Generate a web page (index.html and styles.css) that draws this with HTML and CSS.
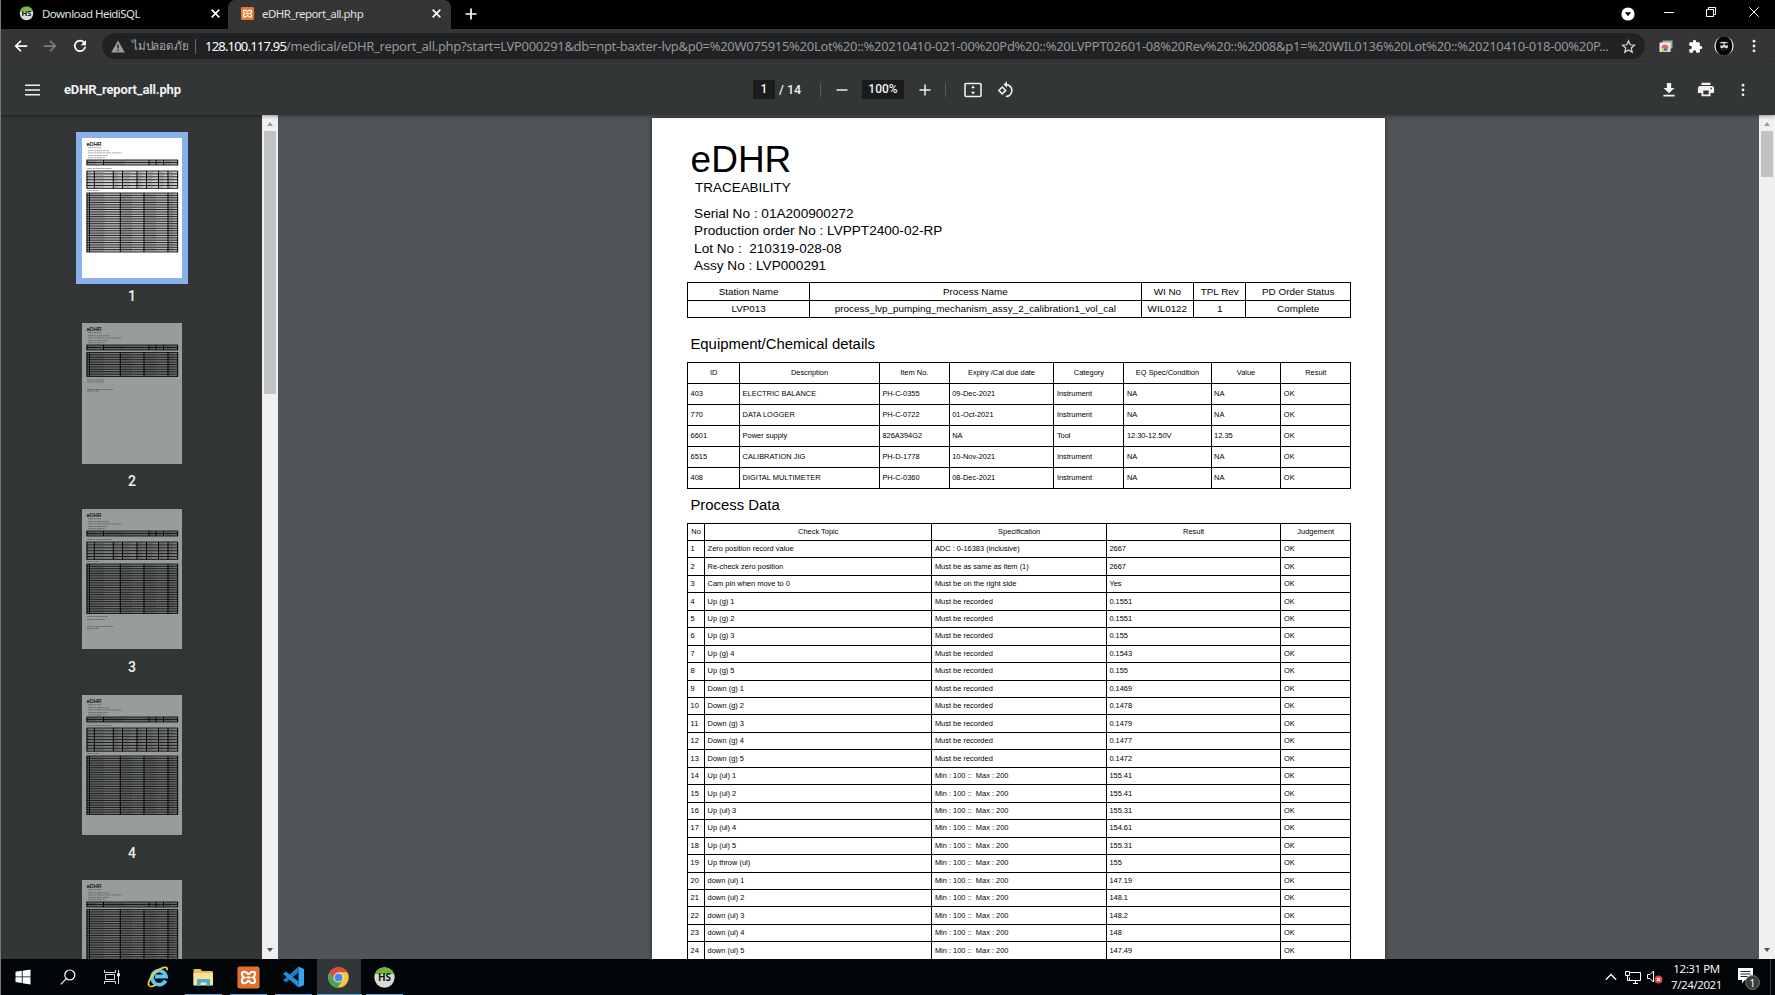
FILE: index.html
```html
<!DOCTYPE html>
<html lang="en">
<head>
<meta charset="utf-8">
<title>eDHR_report_all.php</title>
<link rel="stylesheet" href="styles.css">
</head>
<body>
<div class="screen">
  <header class="tabstrip">
    <div class="tab">
      <svg class="fav" viewBox="0 0 16 16"><circle cx="8" cy="8" r="7.2" fill="#d9dcd6"/><path d="M1 6a7.2 7.2 0 0 1 14 0z" fill="#7db842"/><text x="8" y="11" text-anchor="middle" class="hs-text">HS</text></svg>
      <span class="tab-title t1">Download HeidiSQL</span>
      <svg class="x" viewBox="0 0 10 10"><path d="M1.5 1.5l7 7M8.500 1.500l-7 7"/></svg>
    </div>
    <div class="tab active">
      <svg class="fav" viewBox="0 0 16 16"><rect x="1" y="1" width="14" height="14" rx="1.500" fill="#e8772e"/><path d="M5.200 4.300C3 4.300 3.400 7 5 8c-1.600 1-2 3.700.2 3.700C7 11.700 7 10.200 8 10.200s1 1.500 2.800 1.500C13 11.700 12.600 9 11 8c1.600-1 2-3.700-.2-3.700C9 4.300 9 5.800 8 5.800S7 4.300 5.200 4.300zM6.500 8h3" fill="none" stroke="#fff" stroke-width="1.400"/></svg>
      <span class="tab-title t2">eDHR_report_all.php</span>
      <svg class="x" viewBox="0 0 10 10"><path d="M1.500 1.500l7 7M8.500 1.500l-7 7"/></svg>
    </div>
    <svg class="plus" viewBox="0 0 12 12"><path d="M6 .5v11M.5 6h11"/></svg>
    <div class="win">
      <svg class="w-drop" viewBox="0 0 14 14"><circle cx="7" cy="7" r="6.600" fill="#fff"/><path d="M3.900 5.300h6.200L7 9.300z" fill="#000"/></svg>
      <svg class="w-min" viewBox="0 0 10 10"><path d="M0 5.500h10"/></svg>
      <svg class="w-max" viewBox="0 0 10 10"><path d="M.5 2.500h7v7h-7zM2.500 2.500v-2h7v7h-2"/></svg>
      <svg class="w-close" viewBox="0 0 10 10"><path d="M.3.3l9.400 9.400M9.700.3L.3 9.700"/></svg>
    </div>
  </header>

  <div class="navbar">
    <svg class="nav-i" viewBox="0 0 16 16"><path d="M15 8H2.500M8 2L2 8l6 6"/></svg>
    <svg class="nav-i dim" viewBox="0 0 16 16"><path d="M1 8h12.500M8 2l6 6-6 6"/></svg>
    <svg class="nav-i" viewBox="0 0 16 16"><path d="M13 4.500A6 6 0 1 0 14 8.700"/><path d="M14.800 1.200v6H8.900z" class="solid"/></svg>
    <div class="omnibox">
      <svg class="warn" viewBox="0 0 14 13"><path d="M7 .5L13.800 12.500H.2z" fill="#9a9d9f"/><path d="M7 4.600v4M7 9.700v1.400" stroke="#202325" stroke-width="1.400"/></svg>
      <span class="thai">ไม่ปลอดภัย</span>
      <span class="sep"></span>
      <span class="url"><b>128.100.117.95</b>/medical/eDHR_report_all.php?start=LVP000291&amp;db=npt-baxter-lvp&amp;p0=%20W075915%20Lot%20::%20210410-021-00%20Pd%20::%20LVPPT02601-08%20Rev%20::%2008&amp;p1=%20WIL0136%20Lot%20::%20210410-018-00%20P...</span>
      <svg class="star" viewBox="0 0 24 24"><path d="M12 3l2.700 6.200 6.800.6-5.100 4.500 1.500 6.700-5.900-3.500L6.100 21l1.500-6.700-5.100-4.500 6.800-.6z"/></svg>
    </div>
    <div class="ext">
      <svg class="e-pic" viewBox="0 0 14 14"><path d="M3.500 1.500h10v8h-10z" fill="#aaa9a5"/><path d="M.5 3.500h11v9.500H.5z" fill="#ececea"/><path d="M2.500 9.500V9a3.500 3.500 0 0 1 7 0v.5z" fill="#d5695c"/><path d="M2.500 9.500h3V13h-3z" fill="#e3c667"/><path d="M7.500 9.500h2V13h-2z" fill="#c7b78c"/><circle cx="6.500" cy="10.500" r="1.700" fill="#5572aa"/></svg>
      <svg class="e-puz" viewBox="0 0 24 24"><path d="M20.500 11H19V7a2 2 0 0 0-2-2h-4V3.500a2.500 2.500 0 0 0-5 0V5H4a2 2 0 0 0-2 2v3.800h1.500a2.700 2.700 0 0 1 0 5.400H2V20a2 2 0 0 0 2 2h3.800v-1.500a2.700 2.700 0 0 1 5.400 0V22H17a2 2 0 0 0 2-2v-4h1.500a2.500 2.500 0 0 0 0-5z"/></svg>
      <svg class="e-ava" viewBox="0 0 20 20"><circle cx="10" cy="10" r="9.600" fill="#fff"/><ellipse cx="10" cy="10" rx="8.400" ry="9.800" fill="#050505"/><path d="M5.800 6.500q4-1.500 7.800 0l.4 4.500q-1 3-4 3.800-2.500-.6-3.500-3.300z" fill="#e4e4e4"/><path d="M5.500 7.300h4v2.200H6zM10.500 7.300H14l-.4 2.200h-2.800zM7 12.400q3-2 6 0l-3 3z" fill="#111"/></svg>
      <svg class="dots" viewBox="0 0 4 16"><circle cx="2" cy="2.500" r="1.600"/><circle cx="2" cy="8" r="1.600"/><circle cx="2" cy="13.500" r="1.600"/></svg>
    </div>
  </div>

  <div class="pdfbar">
    <div class="left">
      <svg class="burger" viewBox="0 0 16 12"><path d="M0 1h16M0 6h16M0 11h16"/></svg>
      <b class="file">eDHR_report_all.php</b>
    </div>
    <div class="mid">
      <span class="box pg">1</span><span class="of">/ 14</span>
      <span class="vr"></span>
      <svg class="pm" viewBox="0 0 12 12"><path d="M.5 6h11"/></svg>
      <span class="box zm">100%</span>
      <svg class="pm" viewBox="0 0 12 12"><path d="M6 .5v11M.5 6h11"/></svg>
      <span class="vr v2"></span>
      <svg class="fit" viewBox="0 0 18 16"><rect x="1" y="1.500" width="16" height="13" rx="1"/><path class="solid" d="M9 3.600l2 2.600H7zM9 12.400L7 9.800h4z"/></svg>
      <svg class="rot" viewBox="0 0 18 18"><path d="M5.300 6l3.400 3.400-3.400 3.400-3.500-3.400z"/><path d="M9 3.500a6 6 0 1 1-.2 12"/><path class="solid" d="M10 .2v6.600L6.500 3.500z"/></svg>
    </div>
    <div class="right">
      <svg class="dl" viewBox="0 0 14 16"><path d="M4.700 1h4.600v5.500h3.500L7 12 1.200 6.500h3.500zM1 13.500h12V15.500H1z"/></svg>
      <svg class="pr" viewBox="0 0 20 18"><path d="M5 1.500h10V4H5zM3.500 5h13A2.500 2.500 0 0 1 19 7.500V13h-4v3.500H5V13H1V7.500A2.500 2.500 0 0 1 3.500 5zM7 10v4.500h6V10zM15 7v1.600h1.600V7z" fill-rule="evenodd"/></svg>
      <svg class="dots" viewBox="0 0 4 16"><circle cx="2" cy="2.500" r="1.600"/><circle cx="2" cy="8" r="1.600"/><circle cx="2" cy="13.500" r="1.600"/></svg>
    </div>
  </div>

  <main class="viewer">
    <aside class="side"><div class="thumbs" id="thumbs"></div></aside>
    <div class="bar"><i class="up"></i><div class="grip g1"></div><i class="down"></i></div>
    <section class="canvas">
      <article class="page">
        <h1>eDHR</h1>
        <div class="trace">TRACEABILITY</div>
        <div class="meta">
          <div>Serial No : 01A200900272</div>
          <div>Production order No : LVPPT2400-02-RP</div>
          <div>Lot No :&nbsp; 210319-028-08</div>
          <div>Assy No : LVP000291</div>
        </div>
        <div class="grid station">
          <div>Station Name</div><div>Process Name</div><div>WI No</div><div>TPL Rev</div><div>PD Order Status</div>
          <div>LVP013</div><div>process_lvp_pumping_mechanism_assy_2_calibration1_vol_cal</div><div>WIL0122</div><div>1</div><div>Complete</div>
        </div>
        <h2 class="h-eq">Equipment/Chemical details</h2>
        <div class="grid equip" id="equip"></div>
        <h2 class="h-pd">Process Data</h2>
        <div class="grid process" id="process"></div>
      </article>
    </section>
    <div class="bar"><i class="up"></i><div class="grip g2"></div><i class="down"></i></div>
  </main>

  <footer class="taskbar">
    <div class="tk"><svg width="16" height="16" viewBox="0 0 16 16" fill="#fff"><path d="M.5 2.700l6.300-.9v5.700H.5zM7.600 1.700L15.500.5v7H7.600zM.5 8.300h6.300V14l-6.300-.9zM7.600 8.300h7.900v7.200l-7.900-1.200z"/></svg></div>
    <div class="tk"><svg width="16" height="16" viewBox="0 0 16 16" fill="none" stroke="#fff" stroke-width="1.200"><circle cx="9.800" cy="6" r="5"/><path d="M6.300 9.700L.8 15.300"/></svg></div>
    <div class="tk"><svg width="17" height="16" viewBox="0 0 17 16" fill="none" stroke="#ddd"><path d="M.5 1v2.500h11V1M.5 15v-2.500h11V15M1.500 5.500h9v5h-9zM14.500 1v14"/><path d="M13.500 4.500h2v2.500h-2z" fill="#fff"/></svg></div>
    <div class="tk"><svg width="23" height="22" viewBox="0 0 23 22"><path d="M18.500 14.500A7 7 0 1 1 19 10.500H8" fill="none" stroke="#58c7f3" stroke-width="3.800"/><path d="M2.500 20C-1 17 6 6 14 2.500c4-2 7-1.300 6 1.700" fill="none" stroke="#f3cf3a" stroke-width="1.800"/><path d="M2.500 20c1.500 1 4 .2 6-1" fill="none" stroke="#f3cf3a" stroke-width="1.500"/></svg></div>
    <div class="tk open"><svg width="21" height="19" viewBox="0 0 21 19"><path d="M.5 2q0-1 1-1h6l1.500 2h10q1 0 1 1v13H.5z" fill="#e9bd51"/><path d="M.5 5h19.500v12.500H.5z" fill="#fbe294"/><path d="M4 18v-6q0-1 1-1h11q1 0 1 1v6h-3.500v-3.500h-6V18z" fill="#40aed2"/></svg></div>
    <div class="tk open"><svg width="23" height="23" viewBox="0 0 16 16"><rect x=".3" y=".3" width="15.400" height="15.400" rx="1.500" fill="#e0702f"/><path d="M5.200 4C2.700 4 3.100 7 4.800 8c-1.700 1-2.100 4 .4 4C7 12 7 10.400 8 10.400S9 12 10.800 12c2.500 0 2.100-3 .4-4 1.700-1 2.100-4-.4-4C9 4 9 5.600 8 5.600S7 4 5.200 4zM6.500 8h3" fill="none" stroke="#fff" stroke-width="1.500"/></svg></div>
    <div class="tk open"><svg width="23" height="22" viewBox="0 0 23 22"><path d="M16.500.5L22 3v16l-5.500 2.500z" fill="#3aa5ee"/><path d="M16.500.5v6L4 16.500 1 14.300z" fill="#1680c8"/><path d="M16.500 21.500v-6L4 5.500 1 7.700z" fill="#2190db"/></svg></div>
    <div class="tk open cur"><svg width="21" height="21" viewBox="0 0 20 20"><circle cx="10" cy="10" r="9.800" fill="#f5c93c"/><path d="M10 10L1.500 5.100A9.800 9.800 0 0 1 18.500 5.100H10z" fill="#dc4a3e"/><path d="M1.500 5.100A9.800 9.800 0 0 0 9.300 19.800L14 12.300 10 14.500 6 12.500z" fill="#4aa659"/><path d="M1.500 5.100L5.500 12 10 5.300z" fill="#dc4a3e"/><circle cx="10" cy="10" r="4.800" fill="#f2f2f2"/><circle cx="10" cy="10" r="3.800" fill="#4c87e8"/></svg></div>
    <div class="tk open"><svg width="21" height="21" viewBox="0 0 20 20"><circle cx="10" cy="10" r="9.700" fill="#d8dbd5"/><path d="M.8 7a9.700 9.700 0 0 1 18.400 0z" fill="#6bb83b"/><text x="10" y="13.800" text-anchor="middle" class="hs-big">HS</text></svg></div>
    <div class="tray">
      <svg class="chev" viewBox="0 0 12 8"><path d="M.8 6.800L6 1.500l5.200 5.300"/></svg>
      <svg class="net" viewBox="0 0 16 13"><path d="M4.500 1.500h11v8h-11v-3M8 12.500h5M10.500 9.500v3M.5.500h4v4h-4zM2.500 4.500v5h2"/></svg>
      <svg class="vol" viewBox="0 0 16 14"><path d="M.5 4.500H3L6.500 1v11L3 8.500H.5z" fill="none" stroke="#fff"/><circle cx="11.500" cy="9.500" r="4" fill="#dd3c43"/><path d="M9.800 7.800l3.400 3.400M13.200 7.800l-3.400 3.400" stroke="#fff" stroke-width="1.200"/></svg>
      <div class="clock"><span>12:31 PM</span><span>7/24/2021</span></div>
      <svg class="note" viewBox="0 0 24 24"><path d="M1 1h15v12H8l-3 3v-3H1z" fill="#fff"/><path d="M3.500 4.500h10M3.500 7h10M3.500 9.500h7" stroke="#222"/><circle cx="15.500" cy="15.500" r="6.900" fill="#3a3c3d" stroke="#777a7b"/><text x="15.500" y="19.500" text-anchor="middle">1</text></svg>
      <span class="desk"></span>
    </div>
  </footer>
</div>
<script src="app.js"></script>
</body>
</html>
```
FILE: styles.css
```css
* { box-sizing: border-box; }
body { margin: 0; background: #000; overflow: hidden; font-family: "Noto Sans", "Open Sans", sans-serif; }
svg { display: block; flex: none; overflow: visible; }
.screen { position: relative; width: 1775px; height: 995px; display: flex; flex-direction: column; }
.screen::before { content: ""; position: absolute; left: 0; top: 0; width: 1px; height: 995px; background: #77797a; z-index: 5; }

.tabstrip { height: 29px; background: #000; display: flex; align-items: center; flex: none; color: #dfe1e3; }
.tab { width: 228px; height: 29px; display: flex; align-items: center; padding: 0 7px 2px 19px; }
.tab.active { width: 223px; background: #353535; border-radius: 7px 7px 0 0; padding: 0 9px 2px 12px; }
.fav { width: 15px; height: 15px; margin-right: 8px; }
.active .fav { margin-right: 7px; }
.hs-text { font: bold 8px "Open Sans", sans-serif; fill: #111; }
.tab-title { font-size: 11.5px; white-space: nowrap; flex: 1; line-height: 16px; }
.t1 { letter-spacing: -0.53px; }
.t2 { letter-spacing: -0.54px; }
.x { width: 11px; height: 11px; stroke: #fff; stroke-width: 1.5; }
.plus { width: 12px; height: 12px; margin: 0 0 2px 14px; stroke: #fff; stroke-width: 1.7; }
.win { margin-left: auto; display: flex; align-items: center; height: 29px; padding: 0 16px 5px 0; fill: none; stroke: #fff; stroke-width: 1; }
.w-drop { width: 14px; height: 14px; stroke: none; margin: 4px 29px 0 0; }
.w-min { width: 10px; height: 10px; margin-right: 32px; }
.w-max { width: 10px; height: 10px; margin-right: 33px; }
.w-close { width: 10px; height: 10px; }

.navbar { height: 35px; background: #353537; border-bottom: 1px solid #3e3f41; display: flex; align-items: center; flex: none; padding-left: 14px; }
.nav-i { width: 14px; height: 14px; margin: 0 15px 0 0; fill: none; stroke: #fff; stroke-width: 2; }
.nav-i:nth-child(3) { margin-right: 15px; margin-left: 1px; }
.nav-i .solid { fill: #fff; stroke: none; }
.dim { stroke: #7c7e80; }
.omnibox { width: 1543px; height: 26px; border-radius: 13px; background: #202224; display: flex; align-items: center; padding-left: 9px; color: #94979a; flex: none; }
.warn { width: 14px; height: 13px; flex: none; }
.thai { width: 55px; margin-left: 7px; font-size: 11.7px; white-space: nowrap; letter-spacing: -.2px; flex: none; color: #a5a8aa; }
.sep { width: 1px; height: 15px; background: #67696b; margin: 0 9px 0 8px; flex: none; }
.url { font-size: 13px; width: 1402px; white-space: nowrap; line-height: 18px; letter-spacing: -0.3px; flex: none; }
.url b { font-weight: 400; color: #fff; letter-spacing: -0.8px; }
.star { width: 15px; height: 15px; margin-left: 14px; fill: none; stroke: #d5d7d9; stroke-width: 2; }
.ext { display: flex; align-items: center; padding-left: 14px; }
.e-pic { width: 14px; height: 14px; margin-right: 15px; }
.e-puz { width: 15px; height: 15px; margin-right: 11px; fill: #fff; }
.e-ava { width: 20px; height: 20px; margin-right: 18px; }
.dots { width: 4px; height: 14px; fill: #eee; }

.pdfbar { height: 51px; background: #323637; color: #f1f1f1; display: grid; grid-template-columns: 753px 1fr auto; align-items: center; flex: none; font: 700 12px Roboto, sans-serif; z-index: 2; box-shadow: 0 1px 4px rgba(0,0,0,.4); }
.pdfbar > div { display: flex; align-items: center; }
.burger { width: 15px; height: 12px; margin-left: 25px; stroke: #f1f1f1; stroke-width: 1.7; }
.file { margin-left: 24px; font-size: 13px; font-weight: 700; letter-spacing: -.16px; }
.box { background: #191b1c; height: 19px; line-height: 19px; text-align: center; font-weight: 500; }
.pg { width: 22px; }
.of { font-weight: 500; margin-left: 4px; width: 24px; white-space: nowrap; font-size: 12.5px; }
.vr { width: 1px; height: 14px; background: #595c5e; margin: 0 15px 0 17px; }
.v2 { margin: 0 18px 0 14px; }
.pm { width: 12px; height: 12px; stroke: #eee; stroke-width: 1.5; }
.zm { width: 42px; margin: 0 15px 0 14px; }
.fit { width: 18px; height: 16px; fill: none; stroke: #eee; stroke-width: 1.6; }
.rot { width: 18px; height: 18px; margin-left: 15px; fill: none; stroke: #eee; stroke-width: 1.6; }
.pdfbar .solid { fill: #eee; stroke: none; }
.right { fill: #f1f1f1; padding-right: 30px; }
.dl { width: 14px; height: 15px; margin-right: 21px; }
.pr { width: 18px; height: 17px; margin-right: 26px; }

.viewer { height: 844px; display: grid; grid-template-columns: 262px 16px 1fr 16px; overflow: hidden; flex: none; }
.side { background: #323637; overflow: hidden; }
.thumbs { padding: 22.500px 0 0 82px; }
.thumb { height: 185.700px; width: 100px; color: #f1f1f1; font: 500 14px/18px Roboto, sans-serif; text-align: center; }
.thumb svg { width: 100px; height: 140.500px; background: #989c9d; margin-bottom: 8.500px; }
.thumb.on svg { background: #fff; outline: 6px solid #8ab0ee; }
.thumb text { font-family: "Liberation Sans", sans-serif; }
.bar { background: #f0f0f2; position: relative; display: flex; flex-direction: column; align-items: center; z-index: 1; }
.bar i { border: 3px solid transparent; height: 0; width: 0; }
.up { border-bottom: 4px solid #9b9b9b !important; margin: 4px 0 5px; }
.down { border-top: 4px solid #505050 !important; margin: auto 0 4px; }
.grip { width: 12px; background: #c1c2c4; }
.g1 { height: 263px; }
.g2 { height: 46px; }
.canvas { background: #525557; overflow: hidden; padding: 3px 0 0 374.300px; }

.page { width: 732.800px; height: 1037px; background: #fff; color: #000; padding: 21px 0 0 34.800px; font-family: "Liberation Sans", Arial, sans-serif; box-shadow: 0 0 4px rgba(0,0,0,.6); }
.page h1 { margin: 0 0 0 3.500px; font-size: 37px; font-weight: 400; line-height: 42px; height: 41px; }
.trace { margin-left: 8px; font-size: 13.450px; line-height: 16px; height: 23.500px; }
.meta { margin-left: 7px; font-size: 13.600px; letter-spacing: 0; line-height: 17.600px; height: 78.500px; padding-top: 1px; }
.page h2 { margin: 0 0 0 3.300px; font-weight: 400; font-size: 14.900px; }
.h-eq { height: 44px; line-height: 18px; padding-top: 17px; }
.h-pd { height: 33.500px; line-height: 18px; padding-top: 7px; }
.grid { display: grid; width: 664px; border: solid #000; border-width: 1px 0 0 1px; }
.grid > div { border: solid #000; border-width: 0 1px 1px 0; display: flex; align-items: center; padding: 0 0 1px 2.500px; white-space: nowrap; font-size: 7.450px; }
.station { grid-template-columns: 122px 331.500px 52.500px 52.300px 104.700px; grid-auto-rows: 17.500px; }
.grid.station > div { font-size: 9.900px; justify-content: center; padding: 0; }
.grid > .hd { justify-content: center; padding: 0 0 1px; }
.equip { grid-template-columns: 52px 139.800px 69.800px 104.700px 70px 87.200px 69.800px 69.700px; grid-auto-rows: 21px; }
.process { grid-template-columns: 17px 227.300px 174.500px 174.500px 69.700px; grid-auto-rows: 17.460px; }

.taskbar { height: 36px; background: #020507; display: flex; flex: none; }
.tk { width: 45.200px; height: 36px; display: flex; align-items: center; justify-content: center; position: relative; }
.cur { background: linear-gradient(90deg, transparent 1px, #313638 1px, #313638 45px, transparent 45px); }
.open::after { content: ""; position: absolute; left: 4px; right: 4px; bottom: 0; height: 1px; background: #6ba3cf; }
.cur::after { left: 1px; right: 0; }
.hs-big { font: 700 9.500px "Open Sans", sans-serif; fill: #111; }
.tray { margin-left: auto; display: flex; align-items: center; color: #fff; }
.chev { width: 12px; height: 8px; margin-right: 8px; fill: none; stroke: #fff; stroke-width: 1.300; }
.net { width: 16px; height: 13px; margin-right: 6px; fill: none; stroke: #fff; }
.vol { width: 16px; height: 14px; margin-right: 8px; }
.clock { width: 51px; display: flex; flex-direction: column; align-items: center; font: 11.500px/16.500px "Open Sans", sans-serif; letter-spacing: -.4px; white-space: nowrap; }
.note { width: 24px; height: 24px; margin: 3px 9px 0 15px; }
.note text { font: 11px "Open Sans", sans-serif; fill: #fff; }
.desk { width: 1px; height: 36px; background: #3b3d3f; margin-right: 4px; }
```
FILE: app.js
```js
const equipHead = ["ID", "Description", "Item No.", "Expiry /Cal due date", "Category", "EQ Spec/Condition", "Value", "Result"];
const equipRows = [
  ["403", "ELECTRIC BALANCE", "PH-C-0355", "09-Dec-2021", "Instrument", "NA", "NA", "OK"],
  ["770", "DATA LOGGER", "PH-C-0722", "01-Oct-2021", "Instrument", "NA", "NA", "OK"],
  ["6601", "Power supply", "826A394G2", "NA", "Tool", "12.30-12.50V", "12.35", "OK"],
  ["6515", "CALIBRATION JIG", "PH-D-1778", "10-Nov-2021", "Instrument", "NA", "NA", "OK"],
  ["408", "DIGITAL MULTIMETER", "PH-C-0360", "08-Dec-2021", "Instrument", "NA", "NA", "OK"]
];
const processHead = ["No", "Check Topic", "Specification", "Result", "Judgement"];
const rec = "Must be recorded";
const lim = "Min : 100 ::  Max : 200";
const processRows = [
  ["Zero position record value", "ADC : 0-16383 (inclusive)", "2667"],
  ["Re-check zero position", "Must be as same as item (1)", "2667"],
  ["Cam pin when move to 0", "Must be on the right side", "Yes"],
  ["Up (g) 1", rec, "0.1551"], ["Up (g) 2", rec, "0.1551"], ["Up (g) 3", rec, "0.155"],
  ["Up (g) 4", rec, "0.1543"], ["Up (g) 5", rec, "0.155"],
  ["Down (g) 1", rec, "0.1469"], ["Down (g) 2", rec, "0.1478"], ["Down (g) 3", rec, "0.1479"],
  ["Down (g) 4", rec, "0.1477"], ["Down (g) 5", rec, "0.1472"],
  ["Up (ul) 1", lim, "155.41"], ["Up (ul) 2", lim, "155.41"], ["Up (ul) 3", lim, "155.31"],
  ["Up (ul) 4", lim, "154.61"], ["Up (ul) 5", lim, "155.31"], ["Up throw (ul)", lim, "155"],
  ["down (ul) 1", lim, "147.19"], ["down (ul) 2", lim, "148.1"], ["down (ul) 3", lim, "148.2"],
  ["down (ul) 4", lim, "148"], ["down (ul) 5", lim, "147.49"]
].map((r, i) => [String(i + 1), ...r, "OK"]);

function fill(id, head, rows) {
  const root = document.getElementById(id);
  const add = (text, cls) => {
    const d = document.createElement("div");
    d.textContent = text;
    d.style.whiteSpace = "pre";
    if (cls) d.className = cls;
    root.append(d);
  };
  head.forEach(t => add(t, "hd"));
  rows.flat().forEach(t => add(t));
}
fill("equip", equipHead, equipRows);
fill("process", processHead, processRows);

/* Miniature pages: ruled tables with a grey wash where text sits. */
function table(y, h, rows, cols, wash) {
  let s = `<rect x="4.800" y="${y}" width="91" height="${h}" fill="#000" opacity="${wash}"/>`;
  for (let i = 0; i <= rows; i++) {
    const yy = y + h * i / rows;
    s += `<path d="M4.500 ${yy}H96" stroke="#111" stroke-width=".9"/>`;
  }
  for (const x of cols) s += `<path d="M${x} ${y}V${y + h}" stroke="#000" stroke-width="1"/>`;
  for (let i = 0; i < rows; i++) {
    const yy = y + h * (i + .5) / rows;
    for (let c = 0; c < cols.length - 1; c++) {
      const w = (cols[c + 1] - cols[c]) * .45;
      s += `<path d="M${cols[c] + 1} ${yy}h${w}" stroke="#222" stroke-width=".7" opacity=".35"/>`;
    }
  }
  return s;
}
const c1 = [5, 21.500, 67, 74, 81.500, 95.700];
const c2 = [5, 12.300, 31.300, 40.500, 55, 64.500, 76.500, 86, 95.700];
const c3 = [5, 7.500, 38.300, 62, 86, 95.700];
function line(y, w, x = 5) {
  return `<path d="M${x} ${y}h${w}" stroke="#333" stroke-width=".8" stroke-dasharray="5 .6 3 .4" opacity=".5"/>`;
}
function mini(p) {
  let s = `<text x="4.800" y="7.500" font-size="5.400" fill="#222" stroke="#222" stroke-width=".2">eDHR</text>` + line(9.700, 13, 6);
  s += line(12.700, 21, 6) + line(14.900, 34, 6) + line(17.500, 20, 6) + line(19.700, 17, 6);
  s += table(22, 5, 2, c1, .35);
  if (p.eq) s += line(30.500, 25) + table(33, p.eq * 2.900, p.eq, c2, .18) + line(p.y - 2.500, 12);
  s += table(p.y, p.h, p.n, c3, .25);
  (p.notes || []).forEach(n => { s += line(n[0], n[1]); });
  return s;
}
const pages = [
  { eq: 6, y: 55, h: 59, n: 25 },
  { y: 29.500, h: 24, n: 10, notes: [[57, 18], [59, 17], [66.500, 26], [68, 12]] },
  { eq: 6, y: 55, h: 49.500, n: 21, notes: [[107.500, 21], [110.500, 18], [117.500, 26], [119.500, 12]] },
  { eq: 8, y: 61, h: 58.500, n: 25 },
  { y: 29.500, h: 90, n: 38 }
];
document.getElementById("thumbs").innerHTML = pages.map((p, i) =>
  `<div class="thumb${i ? "" : " on"}"><svg viewBox="0 0 100 140.500">${mini(p)}</svg>${i < 4 ? i + 1 : ""}</div>`).join("");
```
